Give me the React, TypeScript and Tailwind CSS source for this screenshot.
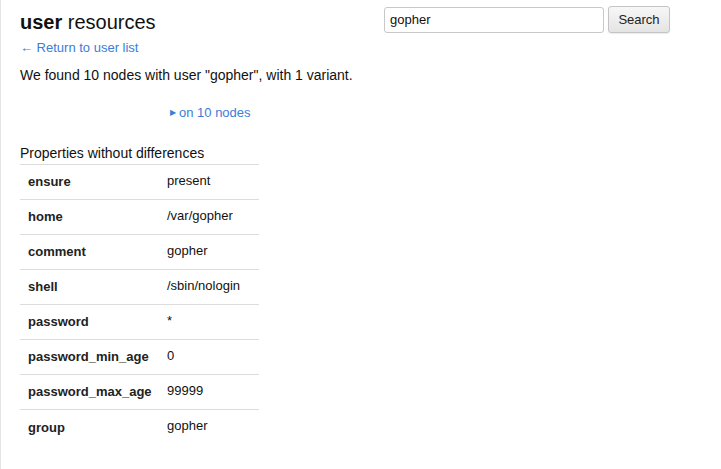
import React from "react";

const props: [string, string][] = [
  ["ensure", "present"],
  ["home", "/var/gopher"],
  ["comment", "gopher"],
  ["shell", "/sbin/nologin"],
  ["password", "*"],
  ["password_min_age", "0"],
  ["password_max_age", "99999"],
  ["group", "gopher"],
];

export default function App() {
  return (
    <div
      className="min-h-[469px] w-[721px] border-l border-[#e4e4e4] bg-white text-[#222]"
      style={{ fontFamily: '"Liberation Sans", Arial, sans-serif' }}
    >
      <div className="flex items-start justify-between pl-[19px] pr-[51px] pt-[6px]">
        <div>
          <h1 className="mt-[3px] text-[20px] leading-[26px] text-[#111]">
            <span className="font-bold">user</span> resources
          </h1>
          <a className="mt-[5px] block text-[13px] leading-[16px] text-[#3b7dd8]">
            ← Return to user list
          </a>
        </div>
        <div className="flex items-center gap-[4px]">
          <input
            readOnly
            value="gopher"
            className="h-[26px] w-[220px] rounded-[3px] border border-[#c8c8c8] px-[5px] text-[13px] text-[#111] outline-none"
          />
          <button
            type="button"
            className="h-[27px] w-[62px] rounded-[3px] border border-[#c4c4c4] bg-gradient-to-b from-[#f7f7f7] to-[#e4e4e4] text-[13px] text-[#222] shadow-[0_1px_1px_rgba(0,0,0,0.08)]"
          >
            Search
          </button>
        </div>
      </div>

      <div className="pl-[19px]">
        <p className="mt-[10px] text-[14px] leading-[18px] text-[#111]">
          We found 10 nodes with user "gopher", with 1 variant.
        </p>

        <div className="mt-[21px] flex items-center pl-[150px] text-[13px] leading-[16px] text-[#3b7dd8]">
          <span className="mr-[3px] text-[8px]">▶</span>
          <span>on 10 nodes</span>
        </div>

        <div className="mt-[23px] w-[239px]">
          <div className="border-b border-[#dcdcdc] pb-[2px] text-[14px] leading-[18px] text-[#111]">
            Properties without differences
          </div>
          {props.map(([k, v], i) => (
            <div
              key={k}
              className={`flex h-[35px] items-center text-[13px] ${
                i < props.length - 1 ? "border-b border-[#dcdcdc]" : ""
              }`}
            >
              <div className="w-[147px] pl-[8px] font-bold text-[#222]">{k}</div>
              <div className="-mt-[3px] text-[#111]">{v}</div>
            </div>
          ))}
        </div>
      </div>
    </div>
  );
}
